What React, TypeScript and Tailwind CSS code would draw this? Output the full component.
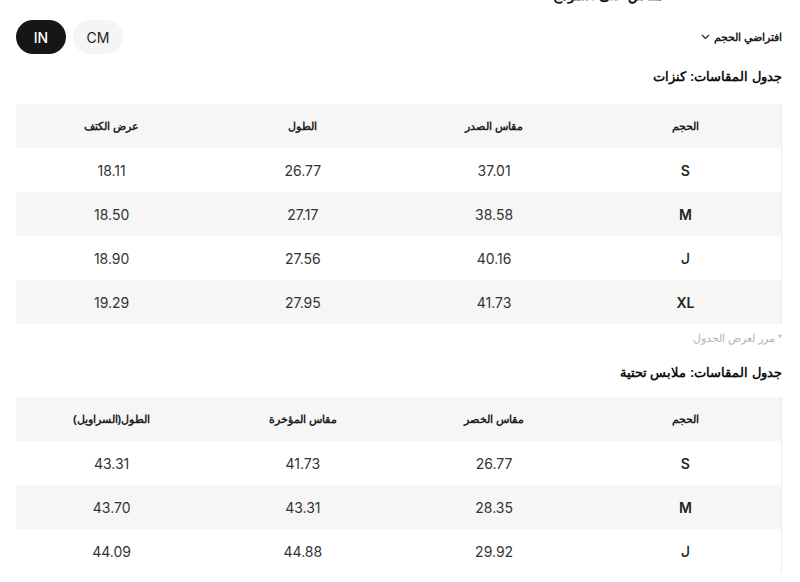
import React from "react";

const tops = {
  head: ["الحجم", "مقاس الصدر", "الطول", "عرض الكتف"],
  rows: [
    ["S", "37.01", "26.77", "18.11"],
    ["M", "38.58", "27.17", "18.50"],
    ["ل", "40.16", "27.56", "18.90"],
    ["XL", "41.73", "27.95", "19.29"],
  ],
};

const under = {
  head: ["الحجم", "مقاس الخصر", "مقاس المؤخرة", "الطول(السراويل)"],
  rows: [
    ["S", "26.77", "41.73", "43.31"],
    ["M", "28.35", "43.31", "43.70"],
    ["ل", "29.92", "44.88", "44.09"],
  ],
};

const arabic = { fontFamily: '"Liberation Sans", Arial, sans-serif' };
const latin = { fontFamily: 'Inter, "Liberation Sans", sans-serif' };

function SizeTable({ data }: { data: { head: string[]; rows: string[][] } }) {
  return (
    <div className="border-r border-[#ececec] mr-[18px] ml-4">
      <div className="grid grid-cols-4 h-[44px] items-center bg-[#f6f6f6]">
        {data.head.map((h, i) => (
          <div key={i} className="text-center text-[11px] font-bold text-[#222]" style={arabic}>
            {h}
          </div>
        ))}
      </div>
      {data.rows.map((r, ri) => (
        <div
          key={ri}
          className={`grid grid-cols-4 h-[44px] items-center ${ri % 2 === 1 ? "bg-[#f6f6f6]" : "bg-white"}`}
        >
          {r.map((c, ci) => (
            <div
              key={ci}
              className={`text-center ${ci === 0 ? "font-semibold text-[#222]" : "text-[#333]"} ${c === "ل" ? "text-[12px] font-normal" : "text-[14px]"}`}
              style={c === "ل" ? arabic : latin}
            >
              {c}
            </div>
          ))}
        </div>
      ))}
    </div>
  );
}

export default function App() {
  return (
    <div dir="rtl" className="w-[800px] h-[582px] overflow-hidden bg-white relative">
      <div className="pr-[18px] -mt-[15px] h-[20px] text-[14px] font-bold text-[#111] leading-[20px] pl-4" style={arabic}>
        <span className="mr-[118px]">مقاس على النموذج</span>
      </div>
      <div className="flex items-center justify-between pr-[18px] pl-4 mt-[15px] h-[34px]">
        <div className="flex items-center gap-1 text-[11px] font-bold text-[#222]" style={arabic}>
          <span>افتراضي الحجم</span>
          <svg width="9" height="6" viewBox="0 0 9 6" fill="none" stroke="#222" strokeWidth="1.2">
            <path d="M1 1 L4.5 4.5 L8 1" />
          </svg>
        </div>
        <div className="flex flex-row-reverse gap-[7px]" dir="ltr">
          <div className="w-[50px] h-[34px] rounded-full bg-[#f5f5f5] text-[#222] flex items-center justify-center text-[14px]" style={latin}>
            CM
          </div>
          <div className="w-[50px] h-[34px] rounded-full bg-[#161616] text-white flex items-center justify-center text-[14px] font-medium" style={latin}>
            IN
          </div>
        </div>
      </div>
      <div className="pr-[18px] mt-[13px] h-[20px] leading-[20px] text-[13px] font-bold text-[#111]" style={arabic}>
        جدول المقاسات: كنزات
      </div>
      <div className="mt-[17px]">
        <SizeTable data={tops} />
      </div>
      <div className="pr-[18px] mt-[7px] text-[11px] text-[#b5b5b5] leading-[14px]" style={arabic}>
        * مرر لعرض الجدول
      </div>
      <div className="pr-[18px] mt-[18px] h-[20px] leading-[20px] text-[13px] font-bold text-[#111]" style={arabic}>
        جدول المقاسات: ملابس تحتية
      </div>
      <div className="mt-[14px]">
        <SizeTable data={under} />
      </div>
    </div>
  );
}
